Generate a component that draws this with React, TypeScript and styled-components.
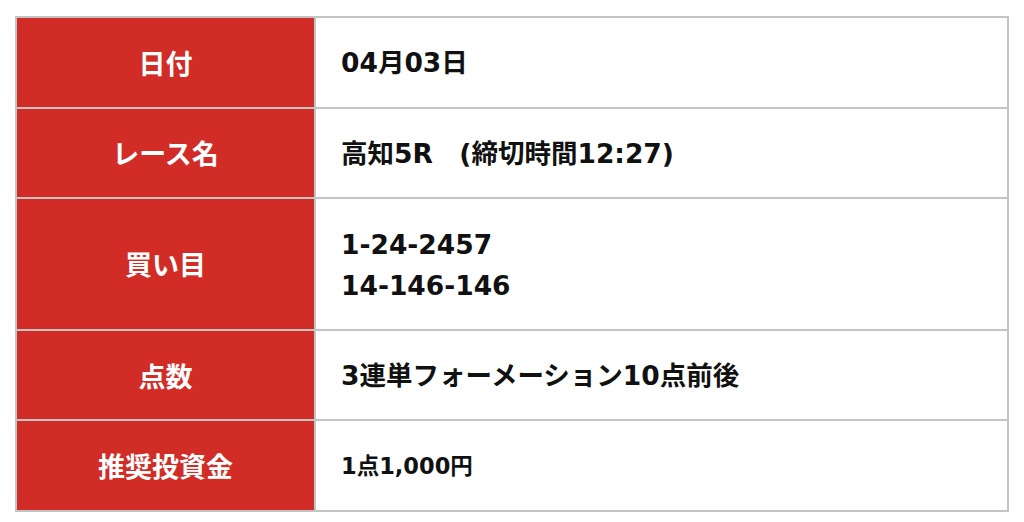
import styled, { createGlobalStyle } from "styled-components";

const GlobalStyle = createGlobalStyle`
  body {
    margin: 0;
    background: #fff;
    font-family: "DejaVu Sans", "Noto Sans CJK JP", sans-serif;
  }
`;

const Page = styled.div`
  padding: 16px 15px 0 15px;
`;

const InfoTable = styled.table`
  width: 994px;
  border-collapse: collapse;
  border: 2px solid #c4c4c4;
`;

const HeadCell = styled.th`
  width: 297px;
  background: #d12c26;
  color: #fff;
  font-family: "Noto Sans CJK JP", sans-serif;
  font-size: 27px;
  font-weight: 700;
  text-align: center;
  border: 2px solid #c4c4c4;
  line-height: 41px;
  padding: 0;
`;

const ValueCell = styled.td<{ $small?: boolean }>`
  color: #111;
  font-size: ${(p) => (p.$small ? "22.5px" : "26.5px")};
  font-weight: 700;
  text-align: left;
  line-height: 41px;
  padding: 24.4px 25px 23.2px 25px;
  border: 2px solid #c4c4c4;
`;

const rows: { label: string; value: string[]; small?: boolean }[] = [
  { label: "日付", value: ["04月03日"] },
  { label: "レース名", value: ["高知5R\u3000(締切時間12:27)"] },
  { label: "買い目", value: ["1-24-2457", "14-146-146"] },
  { label: "点数", value: ["3連単フォーメーション10点前後"] },
  { label: "推奨投資金", value: ["1点1,000円"], small: true },
];

export default function App() {
  return (
    <Page>
      <GlobalStyle />
      <InfoTable>
        <tbody>
          {rows.map((row) => (
            <tr key={row.label}>
              <HeadCell>{row.label}</HeadCell>
              <ValueCell $small={row.small}>
                {row.value.map((line, i) => (
                  <div key={i}>{line}</div>
                ))}
              </ValueCell>
            </tr>
          ))}
        </tbody>
      </InfoTable>
    </Page>
  );
}
